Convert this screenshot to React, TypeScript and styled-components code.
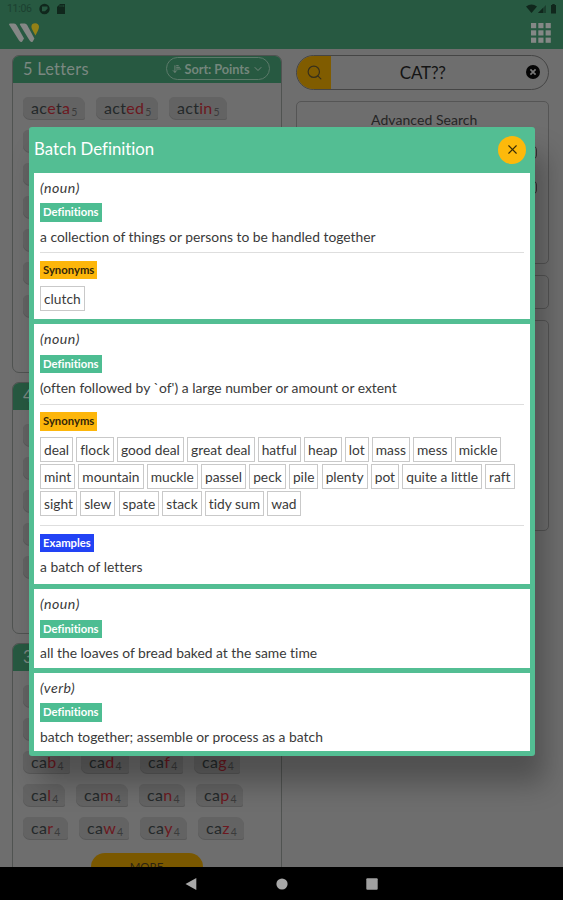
import React from "react";
import styled, { createGlobalStyle } from "styled-components";
import { ArrowDownNarrowWide, ChevronDown, Search, X } from "lucide-react";

const Global = createGlobalStyle`
  * { box-sizing: border-box; }
  html, body { margin: 0; padding: 0; }
  body {
    background: #6e6e6e;
    font-family: Lato, "Open Sans", sans-serif;
    font-variant-ligatures: none;
    overflow: hidden;
  }
`;

const Screen = styled.div`
  position: relative;
  width: 563px;
  height: 900px;
  overflow: hidden;
  display: flex;
  flex-direction: column;
  background: #6e6e6e;
  color: #1c1c1c;
`;

const AppHeader = styled.header`
  flex: 0 0 48.5px;
  background: #275941;
  display: flex;
  flex-direction: column;
`;

const StatusBar = styled.div`
  height: 18px;
  padding: 0 5px 0 7px;
  display: flex;
  align-items: center;
  justify-content: space-between;
  color: #10271c;
`;

const Clock = styled.span`
  width: 27px;
  font: 10.5px/18px Roboto, sans-serif;
  letter-spacing: -0.3px;
  color: #1c4030;
`;

const StatusGroup = styled.div`
  display: flex;
  align-items: center;
  gap: 4px;
  svg { display: block; }
`;

const BrandBar = styled.div`
  height: 30px;
  padding: 0 12px 0 9px;
  display: flex;
  align-items: center;
  justify-content: space-between;
  svg { display: block; }
`;

const Columns = styled.main`
  flex: 1;
  min-height: 0;
  overflow: hidden;
  display: flex;
  align-items: flex-start;
  gap: 14px;
  padding: 6px 14px 0 12px;
`;

const ResultColumn = styled.div`
  width: 270px;
  display: flex;
  flex-direction: column;
  gap: 9px;
`;

const LetterCard = styled.section<{ $h: number }>`
  height: ${(p) => p.$h}px;
  border: 1px solid #505351;
  border-radius: 7px;
  overflow: hidden;
`;

const LetterHead = styled.div`
  height: 27px;
  padding: 0 11px 2px 10px;
  display: flex;
  align-items: center;
  justify-content: space-between;
  background: #275941;
  color: #7b8881;
  font-size: 16.4px;
  letter-spacing: 0.25px;
`;

const SortPill = styled.div`
  width: 104px;
  height: 23px;
  margin-top: 1px;
  display: flex;
  align-items: center;
  justify-content: center;
  gap: 3px;
  border: 1px solid #5c7a6a;
  border-radius: 12px;
  color: #74867c;
  font-size: 12.8px;
  font-weight: 700;
  letter-spacing: -0.1px;
  white-space: nowrap;
`;

const WordRows = styled.div`
  padding: 14px 10px 0;
  display: flex;
  flex-direction: column;
  gap: 11px;
`;

const WordRow = styled.div`
  display: flex;
  gap: 11px;
`;

const WordChip = styled.div<{ $w: number }>`
  width: ${(p) => p.$w}px;
  height: 22px;
  padding-left: 8px;
  flex: none;
  display: flex;
  align-items: baseline;
  background: #636363;
  border-radius: 5px 8px 2px 7px;
  box-shadow: 0 1px 0 #595959;
  font-size: 16px;
  line-height: 22px;
  letter-spacing: 0.3px;
  color: #24292a;
  white-space: nowrap;
`;

const Blank = styled.span`
  color: #6c1820;
`;

const Score = styled.sub`
  margin-left: 1px;
  font-size: 10.5px;
  line-height: 1;
  vertical-align: baseline;
  position: relative;
  top: 2px;
  color: #3b3b3b;
`;

const MoreButton = styled.div`
  align-self: center;
  width: 112px;
  height: 30px;
  margin: 3px 1px 0 0;
  border-radius: 14px;
  background: #7a5800;
  color: #2c2412;
  font-size: 11.5px;
  line-height: 27px;
  letter-spacing: 0;
  text-align: center;
`;

const SearchColumn = styled.div`
  width: 252.5px;
  display: flex;
  flex-direction: column;
`;

const SearchBox = styled.div`
  height: 35px;
  display: flex;
  align-items: center;
  overflow: hidden;
  border: 1px solid #454545;
  border-radius: 18px;
  padding-right: 8px;
  svg { display: block; }
`;

const SearchButton = styled.div`
  width: 34px;
  height: 35px;
  display: flex;
  align-items: center;
  justify-content: center;
  background: #805c00;
  color: #37301b;
`;

const SearchText = styled.div`
  flex: 1;
  padding-right: 11px;
  text-align: center;
  font-size: 17px;
  letter-spacing: -0.2px;
  color: #141414;
`;

const Outline = styled.div<{ $h: number; $top: number }>`
  height: ${(p) => p.$h}px;
  margin-top: ${(p) => p.$top}px;
  border: 1px solid #555;
  border-radius: 5px;
  padding: 8.5px 5px 0 9px;
  text-align: center;
  font-size: 14px;
  letter-spacing: 0.05px;
  line-height: 20px;
  color: #252525;
`;

const FieldGroup = styled.div`
  margin-top: 15px;
  display: flex;
  flex-direction: column;
  gap: 20px;
`;

const Field = styled.div`
  width: 231px;
  height: 15px;
  border: 1px solid #353535;
  border-radius: 5px;
`;

const NavBar = styled.nav`
  flex: 0 0 33px;
  background: #000;
  display: flex;
  align-items: center;
  justify-content: center;
  gap: 78.3px;
  svg { display: block; }
`;

const Modal = styled.section`
  position: absolute;
  left: 29px;
  top: 127px;
  width: 505.5px;
  height: 629px;
  padding: 0 5px;
  border-radius: 3px;
  background: #53be93;
  box-shadow: 10px 27px 28px rgba(0, 0, 0, 0.28);
`;

const ModalHead = styled.div`
  height: 45.5px;
  padding: 0 3.5px 0 0;
  display: flex;
  align-items: center;
  justify-content: space-between;
  color: #fff;
  font-size: 16.8px;
`;

const Title = styled.span`
  padding-bottom: 2px;
`;

const CloseButton = styled.div`
  width: 28px;
  height: 28px;
  border-radius: 50%;
  background: #fdb90b;
  color: #3a2c08;
  display: flex;
  align-items: center;
  justify-content: center;
`;

const Entries = styled.div`
  display: flex;
  flex-direction: column;
  gap: 5px;
`;

const Entry = styled.article<{ $h: number }>`
  height: ${(p) => p.$h}px;
  padding: 0 6px;
  background: #fff;
  color: #3a3a3a;
`;

const PartOfSpeech = styled.div`
  height: 30.5px;
  font-size: 14.2px;
  letter-spacing: 0.45px;
  line-height: 30px;
  font-style: italic;
`;

const Tag = styled.div<{ $tone: "green" | "amber" | "blue" }>`
  width: fit-content;
  height: 18.5px;
  padding: 0 3px;
  font-size: 11.3px;
  line-height: 18px;
  font-weight: 700;
  background: ${(p) => ({ green: "#4dbd92", amber: "#fdb60a", blue: "#2243f5" })[p.$tone]};
  color: ${(p) => (p.$tone === "amber" ? "#33270a" : "#fff")};
`;

const Sentence = styled.div`
  height: 30.5px;
  font-size: 13.86px;
  line-height: 30.5px;
  white-space: nowrap;
`;

const Extra = styled.div`
  border-top: 1px solid #dedede;
  padding-top: 7.5px;
`;

const Synonyms = styled.div`
  padding: 6.5px 0 9px;
  display: flex;
  flex-direction: column;
  gap: 2px;
`;

const SynonymRow = styled.div`
  display: flex;
  gap: 3.2px;
`;

const Synonym = styled.div`
  height: 25px;
  padding: 0 3px;
  border: 1px solid #c9c9c9;
  font-size: 13.77px;
  line-height: 24px;
  white-space: nowrap;
`;

type Word = [kept: string, blank: string, tail: string, tailBlank: string, score: number, width: number];

const five: Word[][] = [
  [["ac", "e", "t", "a", 5, 62], ["act", "ed", "", "", 5, 62], ["act", "in", "", "", 5, 58]],
  ...["ng", "on", "or", "es", "ed", "um"].map((s): Word[] => [["cat", s, "", "", 5, 60]]),
];
const four: Word[][] = ["e", "s", "h", "r", "o"].map((s): Word[] => [["cat", s, "", "", 4, 55]]);
const three: Word[][] = [
  [["a", "r", "c", "", 4, 45]],
  [["a", "c", "t", "", 4, 45]],
  [["ca", "b", "", "", 4, 47], ["ca", "d", "", "", 4, 48], ["ca", "f", "", "", 4, 43], ["ca", "g", "", "", 4, 46]],
  [["ca", "l", "", "", 4, 42], ["ca", "m", "", "", 4, 52], ["ca", "n", "", "", 4, 46], ["ca", "p", "", "", 4, 47]],
  [["ca", "r", "", "", 4, 45], ["ca", "w", "", "", 4, 50], ["ca", "y", "", "", 4, 47], ["ca", "z", "", "", 4, 46]],
];

const Words = ({ rows, more }: { rows: Word[][]; more?: boolean }) => (
  <WordRows>
    {rows.map((row, i) => (
      <WordRow key={i}>
        {row.map(([a, b, c, d, score, w]) => (
          <WordChip key={a + b + c + d} $w={w}>
            {a}<Blank>{b}</Blank>{c}<Blank>{d}</Blank><Score>{score}</Score>
          </WordChip>
        ))}
      </WordRow>
    ))}
    {more && <MoreButton>MORE</MoreButton>}
  </WordRows>
);

const synonyms = [
  ["deal", "flock", "good deal", "great deal", "hatful", "heap", "lot", "mass", "mess", "mickle"],
  ["mint", "mountain", "muckle", "passel", "peck", "pile", "plenty", "pot", "quite a little", "raft"],
  ["sight", "slew", "spate", "stack", "tidy sum", "wad"],
];

interface DefinitionProps {
  h: number;
  kind: string;
  text: string;
  synonymRows?: string[][];
  example?: string;
}

const Definition = ({ h, kind, text, synonymRows, example }: DefinitionProps) => (
  <Entry $h={h}>
    <PartOfSpeech>({kind})</PartOfSpeech>
    <Tag $tone="green">Definitions</Tag>
    <Sentence>{text}</Sentence>
    {synonymRows && (
      <Extra>
        <Tag $tone="amber">Synonyms</Tag>
        <Synonyms>
          {synonymRows.map((row, i) => (
            <SynonymRow key={i}>{row.map((s) => <Synonym key={s}>{s}</Synonym>)}</SynonymRow>
          ))}
        </Synonyms>
      </Extra>
    )}
    {example && (
      <Extra>
        <Tag $tone="blue">Examples</Tag>
        <Sentence>{example}</Sentence>
      </Extra>
    )}
  </Entry>
);

export default function App() {
  return (
    <>
      <Global />
      <Screen>
        <AppHeader>
          <StatusBar>
            <StatusGroup>
              <Clock>11:06</Clock>
              <svg width="13" height="12" viewBox="0 0 13 12">
                <circle cx="6.5" cy="6" r="5.2" fill="#10271c" />
                <path d="M4 3.5h5.5v2.2L7 8.2H4z" fill="#275941" />
              </svg>
              <svg width="12" height="12" viewBox="0 0 12 12">
                <path d="M5 1h5v10H2V4z" fill="#10271c" />
                <path d="M5 2v2M7 2v2M8.7 2v2" stroke="#275941" strokeWidth=".6" />
              </svg>
            </StatusGroup>
            <svg width="32" height="12" viewBox="0 0 32 12">
              <path d="M0 3.5Q5.5 -.5 11 3.5L5.5 10z" fill="#10271c" />
              <path d="M12 10L20 2v8z" fill="#1b3f2e" />
              <path d="M12 10L17 5v5z" fill="#10271c" />
              <path d="M25 2h1.3V1h2.4v1H30v8.5h-5z" fill="#10271c" />
            </svg>
          </StatusBar>
          <BrandBar>
            <svg width="32" height="22" viewBox="0 0 32 22">
              <path d="M0 2.4Q0 1.6 1.2 1.6H5Q6.8 1.6 7.8 3.4L15 16.6L13.2 19.4Q11.6 21 10 18.6z" fill="#858786" />
              <path d="M10.8 2.4Q10.8 1.6 12 1.6H15.6Q17.4 1.6 18.4 3.4L25.4 16.4L23.8 19.4Q22.2 21 20.6 18.6z" fill="#858786" />
              <path d="M22.4 4.4Q22.6 1.3 26.2 1.3T30 4.8Q30 7.4 26.4 13.4L23.2 7.4Q22.4 6 22.4 4.4z" fill="#938116" />
            </svg>
            <svg width="20" height="20" viewBox="0 0 20 20">
              {[0, 7.3, 14.6].map((y) =>
                [0, 7.3, 14.6].map((x) => <rect key={`${x}-${y}`} x={x} y={y} width="5.2" height="5.2" fill="#848886" />)
              )}
            </svg>
          </BrandBar>
        </AppHeader>
        <Columns>
          <ResultColumn>
            <LetterCard $h={318}>
              <LetterHead>
                5 Letters
                <SortPill>
                  <ArrowDownNarrowWide size={10} strokeWidth={2.2} />
                  Sort: Points
                  <ChevronDown size={12} strokeWidth={2} />
                </SortPill>
              </LetterHead>
              <Words rows={five} />
            </LetterCard>
            <LetterCard $h={252}>
              <LetterHead>4 Letters</LetterHead>
              <Words rows={four} />
            </LetterCard>
            <LetterCard $h={270}>
              <LetterHead>3 Letters</LetterHead>
              <Words rows={three} more />
            </LetterCard>
          </ResultColumn>
          <SearchColumn>
            <SearchBox>
              <SearchButton><Search size={17} strokeWidth={1.7} /></SearchButton>
              <SearchText>CAT??</SearchText>
              <svg width="14" height="14" viewBox="0 0 14 14">
                <circle cx="7" cy="7" r="7" fill="#050505" />
                <path d="M4.4 4.4l5.2 5.2M9.6 4.4L4.4 9.6" stroke="#777" strokeWidth="1.7" />
              </svg>
            </SearchBox>
            <Outline $h={163} $top={11}>
              Advanced Search
              <FieldGroup><Field /><Field /></FieldGroup>
            </Outline>
            <Outline $h={34} $top={11} />
            <Outline $h={211} $top={11} />
          </SearchColumn>
        </Columns>
        <NavBar>
          <svg width="12" height="12" viewBox="0 0 12 12"><path d="M11.3 0v12L.5 6z" fill="#a8a8a8" /></svg>
          <svg width="12" height="12" viewBox="0 0 12 12"><circle cx="6" cy="6" r="5.6" fill="#a8a8a8" /></svg>
          <svg width="12" height="12" viewBox="0 0 12 12"><rect x=".3" y=".3" width="11.4" height="11.4" rx="1" fill="#a0a0a0" /></svg>
        </NavBar>
        <Modal>
          <ModalHead>
            <Title>Batch Definition</Title>
            <CloseButton><X size={15} strokeWidth={1.8} /></CloseButton>
          </ModalHead>
          <Entries>
            <Definition h={146.5} kind="noun" text="a collection of things or persons to be handled together" synonymRows={[["clutch"]]} />
            <Definition h={260} kind="noun" text="(often followed by `of') a large number or amount or extent" synonymRows={synonyms} example="a batch of letters" />
            <Definition h={78.5} kind="noun" text="all the loaves of bread baked at the same time" />
            <Definition h={78.5} kind="verb" text="batch together; assemble or process as a batch" />
          </Entries>
        </Modal>
      </Screen>
    </>
  );
}
